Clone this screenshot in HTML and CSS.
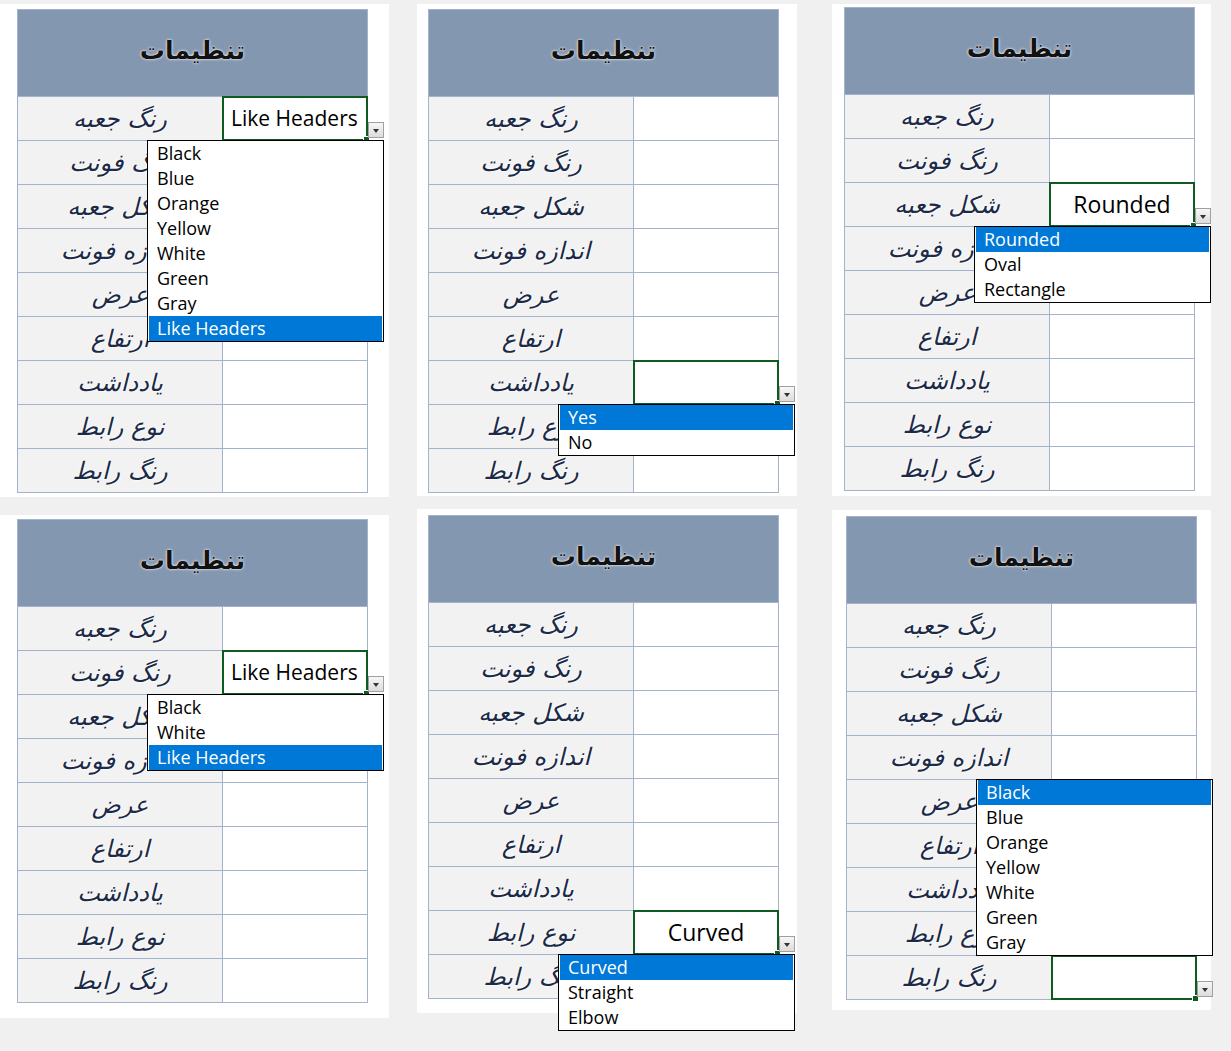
FILE: index.html
```html
<!DOCTYPE html>
<html lang="fa">
<head>
    <meta charset="utf-8" />
    <title>تنظیمات</title>
    <link rel="stylesheet" href="styles.css">
</head>
<body>

    <div class="board">

        <div class="board-row row-top">

            <!-- box colour list -->
            <section class="card card-1">
                <table class="sheet">
                    <colgroup><col class="col-label"><col class="col-value"></colgroup>
                    <tr><th colspan="2">تنظیمات</th></tr>
                    <tr>
                        <td class="label">رنگ جعبه</td>
                        <td class="value active">
                            <span class="selection"></span>
                            <span class="cell-text">Like Headers</span>
                            <span class="dd-btn"></span>
                            <ul class="dd-list">
                                <li>Black</li>
                                <li>Blue</li>
                                <li>Orange</li>
                                <li>Yellow</li>
                                <li>White</li>
                                <li>Green</li>
                                <li>Gray</li>
                                <li class="on">Like Headers</li>
                            </ul>
                        </td>
                    </tr>
                    <tr><td class="label">رنگ فونت</td><td class="value"></td></tr>
                    <tr><td class="label">شکل جعبه</td><td class="value"></td></tr>
                    <tr><td class="label">اندازه فونت</td><td class="value"></td></tr>
                    <tr><td class="label">عرض</td><td class="value"></td></tr>
                    <tr><td class="label">ارتفاع</td><td class="value"></td></tr>
                    <tr><td class="label">یادداشت</td><td class="value"></td></tr>
                    <tr><td class="label">نوع رابط</td><td class="value"></td></tr>
                    <tr><td class="label">رنگ رابط</td><td class="value"></td></tr>
                </table>
            </section>

            <!-- note yes / no -->
            <section class="card card-2">
                <table class="sheet">
                    <colgroup><col class="col-label"><col class="col-value"></colgroup>
                    <tr><th colspan="2">تنظیمات</th></tr>
                    <tr><td class="label">رنگ جعبه</td><td class="value"></td></tr>
                    <tr><td class="label">رنگ فونت</td><td class="value"></td></tr>
                    <tr><td class="label">شکل جعبه</td><td class="value"></td></tr>
                    <tr><td class="label">اندازه فونت</td><td class="value"></td></tr>
                    <tr><td class="label">عرض</td><td class="value"></td></tr>
                    <tr><td class="label">ارتفاع</td><td class="value"></td></tr>
                    <tr>
                        <td class="label">یادداشت</td>
                        <td class="value active">
                            <span class="selection"></span>
                            <span class="dd-btn"></span>
                            <ul class="dd-list">
                                <li class="on">Yes</li>
                                <li>No</li>
                            </ul>
                        </td>
                    </tr>
                    <tr><td class="label">نوع رابط</td><td class="value"></td></tr>
                    <tr><td class="label">رنگ رابط</td><td class="value"></td></tr>
                </table>
            </section>

            <!-- box shape -->
            <section class="card card-3">
                <table class="sheet">
                    <colgroup><col class="col-label"><col class="col-value"></colgroup>
                    <tr><th colspan="2">تنظیمات</th></tr>
                    <tr><td class="label">رنگ جعبه</td><td class="value"></td></tr>
                    <tr><td class="label">رنگ فونت</td><td class="value"></td></tr>
                    <tr>
                        <td class="label">شکل جعبه</td>
                        <td class="value active">
                            <span class="selection"></span>
                            <span class="cell-text center">Rounded</span>
                            <span class="dd-btn"></span>
                            <ul class="dd-list">
                                <li class="on">Rounded</li>
                                <li>Oval</li>
                                <li>Rectangle</li>
                            </ul>
                        </td>
                    </tr>
                    <tr><td class="label">اندازه فونت</td><td class="value"></td></tr>
                    <tr><td class="label">عرض</td><td class="value"></td></tr>
                    <tr><td class="label">ارتفاع</td><td class="value"></td></tr>
                    <tr><td class="label">یادداشت</td><td class="value"></td></tr>
                    <tr><td class="label">نوع رابط</td><td class="value"></td></tr>
                    <tr><td class="label">رنگ رابط</td><td class="value"></td></tr>
                </table>
            </section>

        </div>

        <div class="board-row row-bottom">

            <!-- font colour list -->
            <section class="card card-4">
                <table class="sheet">
                    <colgroup><col class="col-label"><col class="col-value"></colgroup>
                    <tr><th colspan="2">تنظیمات</th></tr>
                    <tr><td class="label">رنگ جعبه</td><td class="value"></td></tr>
                    <tr>
                        <td class="label">رنگ فونت</td>
                        <td class="value active">
                            <span class="selection"></span>
                            <span class="cell-text">Like Headers</span>
                            <span class="dd-btn"></span>
                            <ul class="dd-list">
                                <li>Black</li>
                                <li>White</li>
                                <li class="on">Like Headers</li>
                            </ul>
                        </td>
                    </tr>
                    <tr><td class="label">شکل جعبه</td><td class="value"></td></tr>
                    <tr><td class="label">اندازه فونت</td><td class="value"></td></tr>
                    <tr><td class="label">عرض</td><td class="value"></td></tr>
                    <tr><td class="label">ارتفاع</td><td class="value"></td></tr>
                    <tr><td class="label">یادداشت</td><td class="value"></td></tr>
                    <tr><td class="label">نوع رابط</td><td class="value"></td></tr>
                    <tr><td class="label">رنگ رابط</td><td class="value"></td></tr>
                </table>
            </section>

            <!-- connector type -->
            <section class="card card-5">
                <table class="sheet">
                    <colgroup><col class="col-label"><col class="col-value"></colgroup>
                    <tr><th colspan="2">تنظیمات</th></tr>
                    <tr><td class="label">رنگ جعبه</td><td class="value"></td></tr>
                    <tr><td class="label">رنگ فونت</td><td class="value"></td></tr>
                    <tr><td class="label">شکل جعبه</td><td class="value"></td></tr>
                    <tr><td class="label">اندازه فونت</td><td class="value"></td></tr>
                    <tr><td class="label">عرض</td><td class="value"></td></tr>
                    <tr><td class="label">ارتفاع</td><td class="value"></td></tr>
                    <tr><td class="label">یادداشت</td><td class="value"></td></tr>
                    <tr>
                        <td class="label">نوع رابط</td>
                        <td class="value active">
                            <span class="selection"></span>
                            <span class="cell-text center">Curved</span>
                            <span class="dd-btn"></span>
                            <ul class="dd-list">
                                <li class="on">Curved</li>
                                <li>Straight</li>
                                <li>Elbow</li>
                            </ul>
                        </td>
                    </tr>
                    <tr><td class="label">رنگ رابط</td><td class="value"></td></tr>
                </table>
            </section>

            <!-- connector colour, list opens upwards -->
            <section class="card card-6">
                <table class="sheet">
                    <colgroup><col class="col-label"><col class="col-value"></colgroup>
                    <tr><th colspan="2">تنظیمات</th></tr>
                    <tr><td class="label">رنگ جعبه</td><td class="value"></td></tr>
                    <tr><td class="label">رنگ فونت</td><td class="value"></td></tr>
                    <tr><td class="label">شکل جعبه</td><td class="value"></td></tr>
                    <tr><td class="label">اندازه فونت</td><td class="value"></td></tr>
                    <tr><td class="label">عرض</td><td class="value"></td></tr>
                    <tr><td class="label">ارتفاع</td><td class="value"></td></tr>
                    <tr><td class="label">یادداشت</td><td class="value"></td></tr>
                    <tr><td class="label">نوع رابط</td><td class="value"></td></tr>
                    <tr>
                        <td class="label">رنگ رابط</td>
                        <td class="value active">
                            <span class="selection"></span>
                            <span class="dd-btn"></span>
                            <ul class="dd-list up">
                                <li class="on">Black</li>
                                <li>Blue</li>
                                <li>Orange</li>
                                <li>Yellow</li>
                                <li>White</li>
                                <li>Green</li>
                                <li>Gray</li>
                            </ul>
                        </td>
                    </tr>
                </table>
            </section>

        </div>

    </div>

</body>
</html>
```

FILE: styles.css
```css
body {
    margin: 0;
    background-color: #f0f0f0;
    font-family: "Open Sans", "Noto Sans", sans-serif;
    color: #000;
}

.board {
    min-height: 1051px;
}

.board-row {
    display: flex;
    align-items: flex-start;
}

.row-top {
    padding-top: 4px;
}

.row-bottom {
    margin-top: 12px;
}

.card {
    background-color: #fff;
    box-sizing: border-box;
}

.card-1 {
    width: 389px;
    height: 493px;
    padding: 5px 0 0 17px;
}

.card-2 {
    width: 380px;
    height: 492px;
    margin-left: 28px;
    padding: 5px 0 0 11px;
}

.card-3 {
    width: 379px;
    height: 492px;
    margin-left: 35px;
    padding: 3px 0 0 12px;
}

.card-4 {
    width: 389px;
    height: 503px;
    margin-top: 6px;
    padding: 4px 0 0 17px;
}

.card-5 {
    width: 380px;
    height: 504px;
    margin-left: 28px;
    padding: 6px 0 0 11px;
}

.card-6 {
    width: 379px;
    height: 500px;
    margin-top: 1px;
    margin-left: 35px;
    padding: 6px 0 0 14px;
}

/* sheet */

.sheet {
    border-collapse: collapse;
    table-layout: fixed;
    width: 350px;
}

.col-label {
    width: 205px;
}

.col-value {
    width: 145px;
}

.sheet th {
    height: 87px;
    padding: 0 0 5px;
    box-sizing: border-box;
    background-color: #8497b0;
    border: 1px solid #a3b3cb;
    font: bold 25px "DejaVu Sans", sans-serif;
    color: #111;
    text-shadow: 0 0 3px #fff, 0 0 1px #fff;
}

.sheet td {
    height: 43px;
    padding: 0;
    border: 1px solid #a3b3cb;
}

.sheet .label {
    background-color: #f2f2f2;
    text-align: center;
    font: italic 24px "DejaVu Sans", sans-serif;
    color: #1b2a47;
    text-shadow: 0 0 3px #fff, 0 0 2px #fff;
}

.sheet .value {
    background-color: #fff;
}

.value.active {
    position: relative;
}

.selection {
    position: absolute;
    top: -1px;
    left: -1px;
    right: -1px;
    bottom: -1px;
    border: 2px solid #0f5a20;
}

    .selection::after {
        content: "";
        position: absolute;
        right: -4px;
        bottom: -4px;
        width: 5px;
        height: 5px;
        background-color: #0f5a20;
        border: 1px solid #fff;
    }

.cell-text {
    display: block;
    padding-left: 8px;
    font-size: 21px;
    line-height: 43px;
    white-space: nowrap;
}

    .cell-text.center {
        padding-left: 0;
        text-align: center;
        font-size: 23px;
    }

/* drop down */

.dd-btn {
    position: absolute;
    right: -17px;
    bottom: 2px;
    width: 16px;
    height: 16px;
    box-sizing: border-box;
    border: 1px solid #a0a0a0;
    background: linear-gradient(#f7f7f7, #dcdcdc);
    z-index: 3;
}

    .dd-btn::after {
        content: "";
        position: absolute;
        left: 4px;
        top: 6px;
        border-left: 3px solid transparent;
        border-right: 3px solid transparent;
        border-top: 4px solid #333;
    }

.dd-list {
    position: absolute;
    left: -76px;
    right: -17px;
    top: 100%;
    margin: 0;
    padding: 0;
    list-style: none;
    background-color: #fff;
    border: 1px solid #000;
    z-index: 4;
    font-size: 18px;
    line-height: 25px;
}

    .dd-list.up {
        top: auto;
        bottom: 100%;
    }

    .dd-list li {
        margin: 0 1px;
        padding-left: 8px;
        white-space: nowrap;
    }

        .dd-list li.on {
            background-color: #0078d7;
            color: #fff;
        }
```
